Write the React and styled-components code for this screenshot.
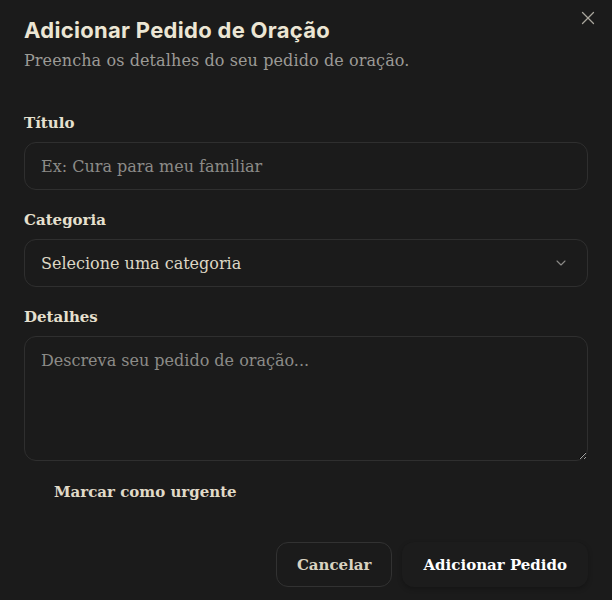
import React from 'react'
import styled, { createGlobalStyle } from 'styled-components'

const GlobalStyle = createGlobalStyle`
  html, body {
    margin: 0;
    padding: 0;
    background: #1b1b1b;
  }
  body {
    font-family: 'DejaVu Serif', 'Liberation Serif', serif;
  }
  * { box-sizing: border-box; }
`

const Dialog = styled.div`
  position: relative;
  width: 612px;
  height: 600px;
  background: #1b1b1b;
  padding: 15px 24px 0 24px;
  display: flex;
  flex-direction: column;
`

const Close = styled.button`
  position: absolute;
  top: 7px;
  right: 13px;
  width: 22px;
  height: 22px;
  padding: 0;
  border: none;
  background: none;
  color: #a9a69d;
  display: flex;
  align-items: center;
  justify-content: center;
`

const Title = styled.h2`
  margin: 0;
  font-family: 'Inter', 'Noto Sans', sans-serif;
  font-weight: 700;
  font-size: 22px;
  letter-spacing: 0.3px;
  color: #ece6d4;
  line-height: 30px;
`

const Subtitle = styled.p`
  margin: 1px 0 0;
  font-size: 16px;
  letter-spacing: 0.1px;
  color: #9b9a96;
  line-height: 30px;
`

const Form = styled.div`
  margin-top: 36px;
  display: flex;
  flex-direction: column;
  gap: 19px;
`

const Field = styled.div`
  display: flex;
  flex-direction: column;
  gap: 8px;
`

const Label = styled.label`
  font-size: 15px;
  font-weight: 700;
  color: #e6e0cf;
  line-height: 22px;
`

const Input = styled.input`
  width: 100%;
  height: 48px;
  border: 1px solid #2f2f2f;
  border-radius: 12px;
  background: #1b1b1b;
  padding: 0 16px;
  font-family: inherit;
  font-size: 16px;
  color: #e6e0cf;
  outline: none;
  &::placeholder { color: #8c8b88; }
`

const Select = styled.div`
  height: 48px;
  border: 1px solid #2f2f2f;
  border-radius: 12px;
  padding: 0 18px 0 16px;
  display: flex;
  align-items: center;
  justify-content: space-between;
  font-size: 16px;
  color: #ddd7c5;
`

const TextArea = styled.textarea`
  width: 100%;
  height: 125px;
  border: 1px solid #2f2f2f;
  border-radius: 12px;
  background: #1b1b1b;
  padding: 13px 16px;
  font-family: inherit;
  font-size: 16px;
  line-height: 22px;
  color: #e6e0cf;
  outline: none;
  resize: vertical;
  &::placeholder { color: #8c8b88; }
`

const Urgent = styled.label`
  display: flex;
  align-items: center;
  padding-left: 30px;
  font-size: 15px;
  font-weight: 700;
  color: #e0dac8;
  line-height: 24px;
`

const Footer = styled.div`
  margin-top: 38px;
  display: flex;
  justify-content: flex-end;
  gap: 10px;
`

const Button = styled.button`
  height: 45px;
  padding: 0 20px;
  border-radius: 12px;
  font-family: inherit;
  font-size: 15px;
  font-weight: 700;
  background: ${(p) => (p.$primary ? '#1c1c1c' : '#1b1b1b')};
  color: ${(p) => (p.$primary ? '#ffffff' : '#d9d3c1')};
  border: 1px solid ${(p) => (p.$primary ? 'transparent' : '#323232')};
  box-shadow: ${(p) => (p.$primary ? '0 2px 5px rgba(0,0,0,0.25)' : 'none')};
`

export default function App() {
  return (
    <>
      <GlobalStyle />
      <Dialog>
        <Close aria-label='Fechar'>
          <svg width='22' height='22' viewBox='0 0 24 24' fill='none' stroke='currentColor' strokeWidth='1.4' strokeLinecap='round'>
            <path d='M18 6 6 18' />
            <path d='m6 6 12 12' />
          </svg>
        </Close>
        <Title>Adicionar Pedido de Oração</Title>
        <Subtitle>Preencha os detalhes do seu pedido de oração.</Subtitle>
        <Form>
          <Field>
            <Label>Título</Label>
            <Input placeholder='Ex: Cura para meu familiar' />
          </Field>
          <Field>
            <Label>Categoria</Label>
            <Select>
              <span>Selecione uma categoria</span>
              <svg width='16' height='16' viewBox='0 0 24 24' fill='none' stroke='#8c8b88' strokeWidth='1.6' strokeLinecap='round' strokeLinejoin='round'>
                <path d='m6 9 6 6 6-6' />
              </svg>
            </Select>
          </Field>
          <Field>
            <Label>Detalhes</Label>
            <TextArea placeholder='Descreva seu pedido de oração...' />
          </Field>
          <Urgent>Marcar como urgente</Urgent>
        </Form>
        <Footer>
          <Button>Cancelar</Button>
          <Button $primary>Adicionar Pedido</Button>
        </Footer>
      </Dialog>
    </>
  )
}
